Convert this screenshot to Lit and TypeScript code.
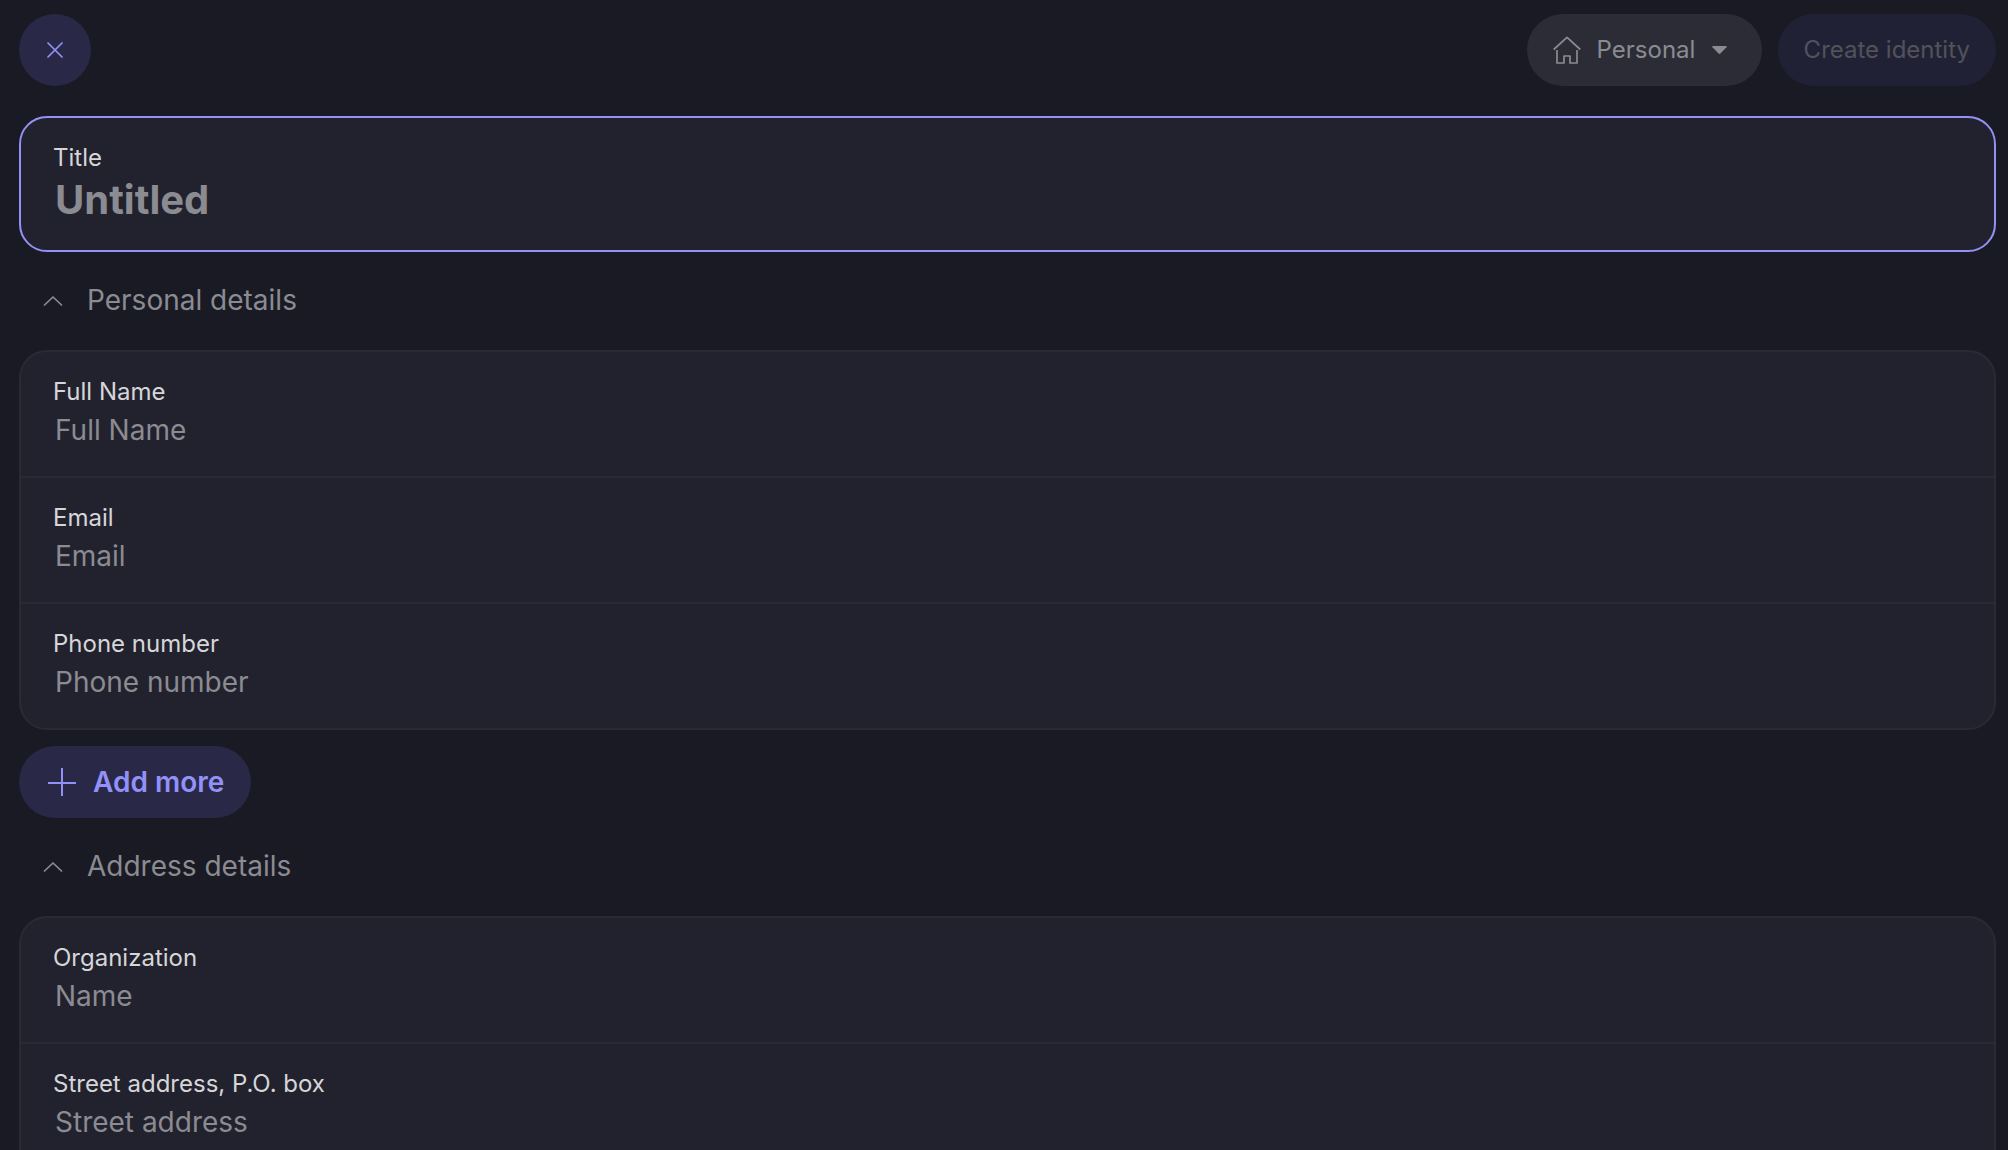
import { LitElement, html, css, svg } from "lit";
import { customElement, property } from "lit/decorators.js";

interface Field {
  id: string;
  label: string;
  placeholder: string;
  type?: string;
}

const PERSONAL: Field[] = [
  { id: "full-name", label: "Full Name", placeholder: "Full Name" },
  { id: "email", label: "Email", placeholder: "Email", type: "email" },
  { id: "phone", label: "Phone number", placeholder: "Phone number", type: "tel" },
];

const ADDRESS: Field[] = [
  { id: "organization", label: "Organization", placeholder: "Name" },
  { id: "street", label: "Street address, P.O. box", placeholder: "Street address" },
];

const chevron = svg`<path d="M1.500 11 10 3l8.500 8" />`;

@customElement("field-group")
class FieldGroup extends LitElement {
  @property({ attribute: false }) fields: Field[] = [];
  @property({ type: Boolean }) prominent = false;
  /** Square lower corners, for a group that runs on below the fold. */
  @property({ type: Boolean }) open = false;

  static styles = css`
    :host {
      display: block;
    }
    .card {
      border: 2px solid #2a2a35;
      border-radius: 28px;
      background: #22222e;
      overflow: hidden;
    }
    .card.prominent {
      border-color: #9291f7;
    }
    .card.open {
      border-radius: 28px 28px 0 0;
    }
    .field {
      display: flex;
      flex-direction: column;
      padding: 24px 32px;
    }
    .field + .field {
      border-top: 2px solid #2a2a35;
    }
    label {
      font-size: 24px;
      line-height: 32px;
      color: #d6d6d9;
    }
    input {
      width: 100%;
      height: 44px;
      box-sizing: border-box;
      margin: 0;
      padding: 0 2px;
      border: 0;
      outline: 0;
      background: transparent;
      color: #ffffff;
      font: inherit;
      font-size: 28px;
    }
    input::placeholder {
      color: #8b8b92;
      opacity: 1;
    }
    .prominent .field {
      padding-bottom: 26px;
    }
    .prominent input {
      height: 50px;
      font-size: 40px;
      font-weight: 700;
    }
  `;

  render() {
    return html`
      <div class="card ${this.prominent ? "prominent" : ""} ${this.open ? "open" : ""}">
        ${this.fields.map(
          (f) => html`
            <div class="field">
              <label for=${f.id}>${f.label}</label>
              <input id=${f.id} type=${f.type ?? "text"} placeholder=${f.placeholder} />
            </div>
          `
        )}
      </div>
    `;
  }
}

@customElement("app-root")
class AppRoot extends LitElement {
  static styles = css`
    :host {
      display: flex;
      flex-direction: column;
      height: 100vh;
      background: #1a1a25;
      font-family: Inter, "Liberation Sans", sans-serif;
      color: #8b8b92;
    }
    button,
    select {
      font: inherit;
      color: inherit;
      border: 0;
      margin: 0;
      padding: 0;
      background: transparent;
      cursor: pointer;
    }
    svg {
      display: block;
      flex: none;
      fill: none;
      stroke: currentColor;
      stroke-width: 2;
    }
    header {
      display: flex;
      align-items: center;
      justify-content: space-between;
      padding: 14px 12px 30px 19px;
    }
    .actions {
      display: flex;
      gap: 16px;
      font-size: 24px;
    }
    .pill {
      display: flex;
      align-items: center;
      justify-content: center;
      height: 72px;
      box-sizing: border-box;
      border-radius: 36px;
    }
    .close {
      width: 72px;
      background: #292847;
      color: #9291f7;
    }
    .vault {
      padding: 0 35px 0 26px;
      background: #2c2c37;
    }
    .vault select {
      appearance: none;
      margin: 0 16px;
      padding-bottom: 2px;
      outline: 0;
    }
    .thin {
      stroke-width: 1.7;
    }
    .caret {
      fill: currentColor;
      stroke: none;
      pointer-events: none;
    }
    .create {
      padding: 0 26px 2px;
      background: #212136;
      color: #52525b;
      cursor: default;
    }
    main {
      flex: 1;
      min-height: 0;
      overflow-y: auto;
      scrollbar-width: none;
      padding: 0 12px 0 19px;
    }
    h2 {
      margin: 0;
      font-weight: 400;
    }
    .section {
      display: flex;
      align-items: center;
      gap: 24px;
      padding: 31px 24px 33px;
      font-size: 28px;
      line-height: 34px;
    }
    .add {
      margin-top: 16px;
      padding: 0 27px 0 29px;
      gap: 17px;
      background: #292847;
      color: #9291f7;
      font-size: 28px;
      font-weight: 600;
    }
  `;

  private section(title: string) {
    return html`
      <h2>
        <button class="section" type="button" aria-expanded="true">
          <svg class="thin" width="20" height="12" viewBox="0 0 20 12" stroke-linecap="round" stroke-linejoin="round" aria-hidden="true">
            ${chevron}
          </svg>
          ${title}
        </button>
      </h2>
    `;
  }

  render() {
    return html`
      <header>
        <button class="pill close" type="button" aria-label="Close">
          <svg class="thin" width="16" height="16" viewBox="0 0 16 16" stroke-linecap="round" aria-hidden="true">
            <path d="M1 1l14 14M15 1 1 15" />
          </svg>
        </button>
        <div class="actions">
          <label class="pill vault">
            <svg class="thin" width="28" height="28" viewBox="0 0 28 28" stroke-linejoin="round" aria-hidden="true">
              <path d="M.7 13.500 14 1.400l13.300 12.100" />
              <path d="M4 14v13h7v-7h6v7h7V14" />
            </svg>
            <select aria-label="Vault">
              <option>Personal</option>
            </select>
            <svg class="caret" width="15" height="8" viewBox="0 0 15 8" aria-hidden="true">
              <path d="M1 0h13q1.300.2.5 1.200L8.400 7.500q-.9.800-1.800 0L.5 1.200Q-.3.200 1 0z" />
            </svg>
          </label>
          <button class="pill create" type="button" disabled>Create identity</button>
        </div>
      </header>
      <main>
        <field-group prominent .fields=${[{ id: "title", label: "Title", placeholder: "Untitled" }]}></field-group>
        ${this.section("Personal details")}
        <field-group .fields=${PERSONAL}></field-group>
        <button class="pill add" type="button">
          <svg width="28" height="28" viewBox="0 0 28 28" aria-hidden="true">
            <path d="M14 0v28M0 15h28" />
          </svg>
          Add more
        </button>
        ${this.section("Address details")}
        <field-group open .fields=${ADDRESS}></field-group>
      </main>
    `;
  }
}
